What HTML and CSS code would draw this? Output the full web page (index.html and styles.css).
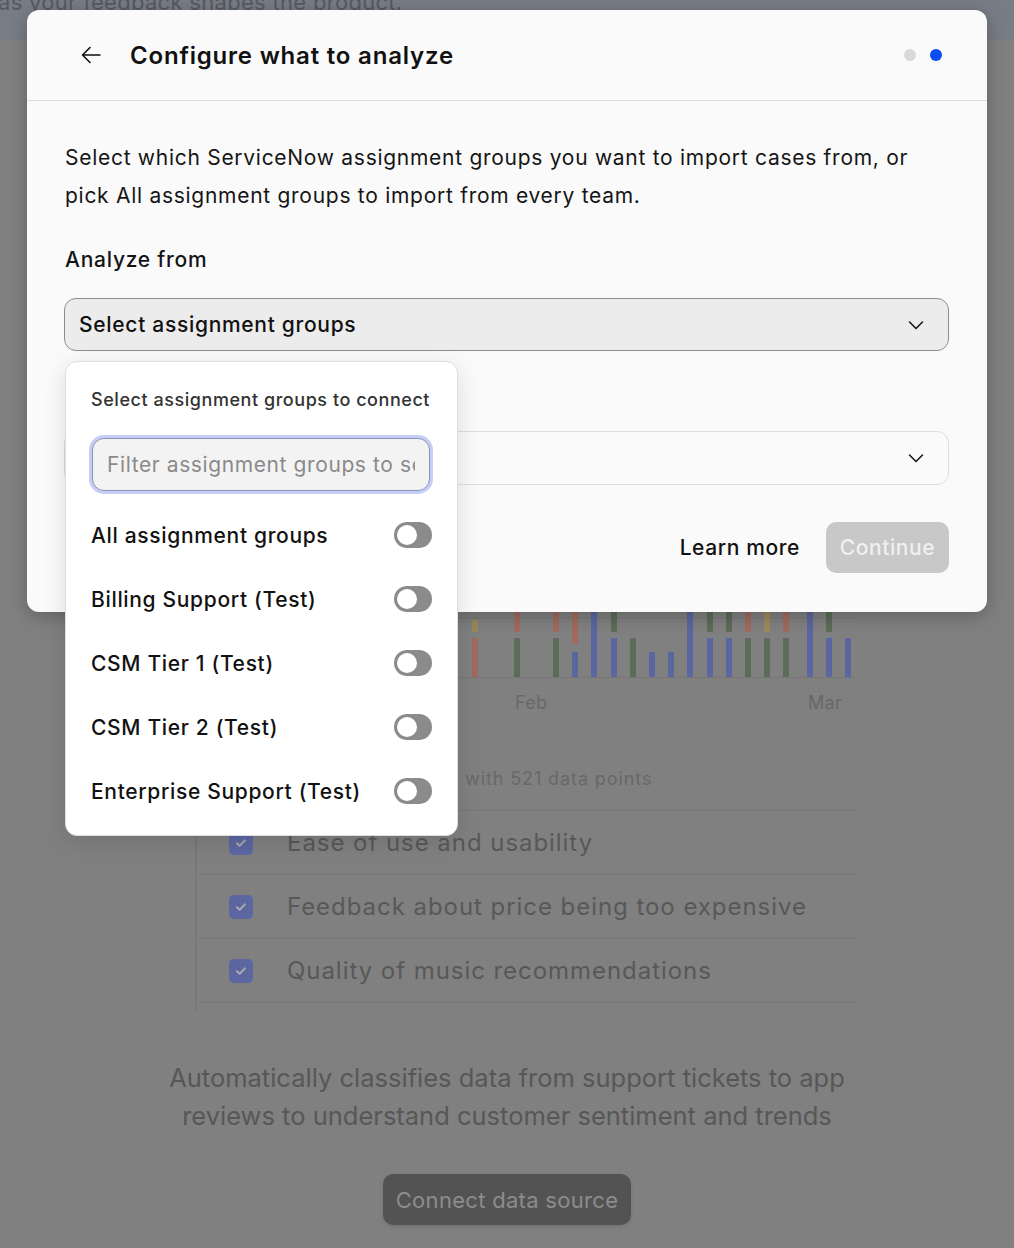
FILE: index.html
```html
<!DOCTYPE html>
<html lang="en">
<head>
<meta charset="utf-8">
<title>Configure what to analyze</title>
<link rel="stylesheet" href="styles.css">
</head>
<body>
<div class="page">
  <div class="topbar"><p class="topbar-text">as your feedback shapes the product.</p></div>

  <section class="card">
    <svg class="chart" width="660" height="80" viewBox="0 0 660 80">
      <line x1="2" y1="18" x2="660" y2="18" stroke="#777" stroke-width="1"/>
      <line x1="2" y1="77.5" x2="660" y2="77.5" stroke="#767676" stroke-width="1"/>
      <g>
        <rect x="277" y="20" width="6" height="12" fill="#9a8a5c"/><rect x="277" y="38" width="6" height="39" fill="#a06b5d"/>
        <rect x="319" y="0" width="6" height="32" fill="#a06b5d"/><rect x="319" y="38" width="6" height="39" fill="#5b6c58"/>
        <rect x="358" y="0" width="6" height="32" fill="#a06b5d"/><rect x="358" y="38" width="6" height="39" fill="#5b6c58"/>
        <rect x="377" y="0" width="6" height="44" fill="#a06b5d"/><rect x="377" y="52" width="6" height="25" fill="#5a66a0"/>
        <rect x="396" y="0" width="6" height="77" fill="#5a66a0"/>
        <rect x="416" y="0" width="6" height="32" fill="#5b6c58"/><rect x="416" y="38" width="6" height="39" fill="#5a66a0"/>
        <rect x="435" y="38" width="6" height="39" fill="#5b6c58"/>
        <rect x="454" y="52" width="6" height="25" fill="#5a66a0"/>
        <rect x="473" y="52" width="6" height="25" fill="#5a66a0"/>
        <rect x="492" y="0" width="6" height="77" fill="#5a66a0"/>
        <rect x="512" y="0" width="6" height="32" fill="#5b6c58"/><rect x="512" y="38" width="6" height="39" fill="#5a66a0"/>
        <rect x="531" y="0" width="6" height="32" fill="#5b6c58"/><rect x="531" y="38" width="6" height="39" fill="#5a66a0"/>
        <rect x="550" y="0" width="6" height="32" fill="#a06b5d"/><rect x="550" y="38" width="6" height="39" fill="#5b6c58"/>
        <rect x="569" y="0" width="6" height="32" fill="#9a8a5c"/><rect x="569" y="38" width="6" height="39" fill="#5b6c58"/>
        <rect x="588" y="0" width="6" height="32" fill="#a06b5d"/><rect x="588" y="38" width="6" height="39" fill="#5b6c58"/>
        <rect x="612" y="0" width="6" height="77" fill="#5a66a0"/>
        <rect x="631" y="0" width="6" height="32" fill="#5b6c58"/><rect x="631" y="38" width="6" height="39" fill="#5a66a0"/>
        <rect x="650" y="38" width="6" height="39" fill="#5a66a0"/>
      </g>
    </svg>
    <div class="axis-labels"><span class="axis-feb">Feb</span><span class="axis-mar">Mar</span></div>
    <div class="summary">with 521 data points</div>
    <ul class="topics">
      <li class="topic"><span class="checkbox"><svg width="14" height="14" viewBox="0 0 14 14"><path d="M3 7.2l2.6 2.6L11 4.4" fill="none" stroke="#a9a9a9" stroke-width="2" stroke-linecap="round" stroke-linejoin="round"/></svg></span>Ease of use and usability</li>
      <li class="topic"><span class="checkbox"><svg width="14" height="14" viewBox="0 0 14 14"><path d="M3 7.2l2.6 2.6L11 4.4" fill="none" stroke="#a9a9a9" stroke-width="2" stroke-linecap="round" stroke-linejoin="round"/></svg></span>Feedback about price being too expensive</li>
      <li class="topic"><span class="checkbox"><svg width="14" height="14" viewBox="0 0 14 14"><path d="M3 7.2l2.6 2.6L11 4.4" fill="none" stroke="#a9a9a9" stroke-width="2" stroke-linecap="round" stroke-linejoin="round"/></svg></span>Quality of music recommendations</li>
    </ul>
  </section>

  <p class="description">Automatically classifies data from support tickets to app reviews to understand customer sentiment and trends</p>
  <div class="cta-wrap"><button class="cta">Connect data source</button></div>
</div>

<div class="modal">
  <header class="modal-header">
    <svg class="back" width="24" height="24" viewBox="0 0 24 24"><path d="M21 12H3.5M11 4.5L3.5 12l7.5 7.5" fill="none" stroke="#111" stroke-width="1.6" stroke-linecap="round" stroke-linejoin="round"/></svg>
    <h1 class="modal-title">Configure what to analyze</h1>
    <div class="steps"><span class="dot"></span><span class="dot dot-active"></span></div>
  </header>
  <div class="modal-body">
    <p class="intro">Select which ServiceNow assignment groups you want to import cases from, or pick All assignment groups to import from every team.</p>
    <div class="field-label">Analyze from</div>
    <div class="select select-open"><span>Select assignment groups</span>
      <svg width="20" height="20" viewBox="0 0 20 20"><path d="M3.5 7l6.5 6.5L16.5 7" fill="none" stroke="#111" stroke-width="1.5" stroke-linecap="round" stroke-linejoin="round"/></svg>
    </div>
    <div class="field-label field-label-2">Time range</div>
    <div class="select select-plain"><span></span>
      <svg width="20" height="20" viewBox="0 0 20 20"><path d="M3.5 7l6.5 6.5L16.5 7" fill="none" stroke="#111" stroke-width="1.5" stroke-linecap="round" stroke-linejoin="round"/></svg>
    </div>
    <div class="modal-footer">
      <a class="learn">Learn more</a>
      <button class="continue">Continue</button>
    </div>
  </div>

  <div class="popover">
    <div class="popover-title">Select assignment groups to connect</div>
    <div class="filter"><input class="filter-input" type="text" placeholder="Filter assignment groups to search"></div>
    <ul class="groups">
      <li class="group"><span>All assignment groups</span><span class="toggle"><span class="knob"></span></span></li>
      <li class="group"><span>Billing Support (Test)</span><span class="toggle"><span class="knob"></span></span></li>
      <li class="group"><span>CSM Tier 1 (Test)</span><span class="toggle"><span class="knob"></span></span></li>
      <li class="group"><span>CSM Tier 2 (Test)</span><span class="toggle"><span class="knob"></span></span></li>
      <li class="group"><span>Enterprise Support (Test)</span><span class="toggle"><span class="knob"></span></span></li>
    </ul>
  </div>
</div>
</body>
</html>
```

FILE: styles.css
```css
* { box-sizing: border-box; }
html, body {
  margin: 0;
  padding: 0;
}
body {
  width: 1014px;
  height: 1248px;
  overflow: hidden;
  background: #808080;
  font-family: Inter, "Noto Sans", sans-serif;
  position: relative;
}
.page {
  display: flex;
  flex-direction: column;
}
.topbar {
  height: 40px;
  background: #787c85;
  overflow: hidden;
}
.topbar-text {
  margin: -11px 0 0 -2px;
  font-size: 22px;
  line-height: 26px;
  letter-spacing: 0.3px;
  color: #555a62;
}
.card {
  margin-left: 195px;
  width: 660px;
  height: 970px;
  padding-top: 560px;
  border-left: 2px solid #787878;
}
.chart { display: block; margin-left: -2px; }
.axis-labels {
  height: 44px;
  display: flex;
  align-items: center;
  font-size: 18px;
  color: #686868;
  padding-right: 13px;
  letter-spacing: 0.3px;
}
.axis-feb { margin-left: 318px; }
.axis-mar { margin-left: auto; }
.summary {
  height: 87px;
  padding: 43px 0 0 268px;
  font-size: 18px;
  line-height: 24px;
  letter-spacing: 0.9px;
  color: #686868;
  border-bottom: 1px solid #777;
}
.topics {
  list-style: none;
  margin: 0;
  padding: 0;
}
.topic {
  height: 64px;
  display: flex;
  align-items: center;
  border-bottom: 1px solid #777;
  font-size: 24px;
  letter-spacing: 0.95px;
  color: #585858;
  padding-left: 32px;
}
.checkbox {
  width: 24px;
  height: 24px;
  border-radius: 5px;
  background: #5c67a2;
  display: flex;
  align-items: center;
  justify-content: center;
  margin-right: 34px;
}
.description {
  margin: 49px auto 0;
  width: 720px;
  text-align: center;
  font-size: 25.5px;
  line-height: 38px;
  color: #575757;
}
.cta-wrap {
  display: flex;
  justify-content: center;
  margin-top: 39px;
}
.cta {
  width: 248px;
  height: 51px;
  border: none;
  border-radius: 10px;
  background: #535353;
  color: #8c8c8c;
  font-family: Inter, sans-serif;
  font-size: 22px;
  letter-spacing: 0.3px;
  box-shadow: 0 2px 4px rgba(0,0,0,0.1);
}

/* Modal */
.modal {
  position: absolute;
  left: 27px;
  top: 10px;
  width: 960px;
  height: 602px;
  background: #fafafa;
  border-radius: 12px;
  box-shadow: 0 4px 18px rgba(0,0,0,0.25);
}
.modal-header {
  height: 91px;
  border-bottom: 1px solid #dcdcdc;
  display: flex;
  align-items: center;
  padding: 0 45px 0 52px;
}
.back { flex: none; }
.modal-title {
  margin: 0 0 0 27px;
  font-size: 24px;
  font-weight: 600;
  color: #111;
  letter-spacing: 0.8px;
}
.steps {
  margin-left: auto;
  display: flex;
  gap: 14px;
}
.dot {
  width: 12px;
  height: 12px;
  border-radius: 50%;
  background: #d9d9d9;
}
.dot-active { background: #0a4cf2; }
.modal-body {
  padding: 38px 38px 0 37px;
}
.intro {
  margin: 0;
  padding-left: 1px;
  font-size: 21px;
  line-height: 38px;
  letter-spacing: 0.72px;
  color: #151515;
}
.field-label {
  margin-top: 30px;
  font-size: 21px;
  line-height: 30px;
  font-weight: 500;
  letter-spacing: 0.75px;
  color: #151515;
  padding-left: 1px;
}
.select {
  margin-top: 23px;
  height: 53px;
  border-radius: 12px;
  display: flex;
  align-items: center;
  justify-content: space-between;
  padding: 0 22px 0 14px;
  font-size: 21px;
  font-weight: 500;
  letter-spacing: 0.7px;
  color: #111;
}
.select-open {
  background: #ececec;
  border: 1.5px solid #8d8d8d;
}
.field-label-2 {
  margin-top: 36px;
  visibility: hidden;
}
.select-plain {
  margin-top: 14px;
  height: 54px;
  background: #fafafa;
  border: 1.5px solid #dedede;
}
.modal-footer {
  margin-top: 37px;
  display: flex;
  justify-content: flex-end;
  align-items: center;
}
.learn {
  font-size: 21px;
  font-weight: 500;
  letter-spacing: 0.6px;
  color: #111;
  margin-right: 26px;
}
.continue {
  width: 123px;
  height: 51px;
  border: none;
  border-radius: 10px;
  background: #c8c8c8;
  color: #f0f0f0;
  font-family: Inter, sans-serif;
  font-size: 21px;
  font-weight: 500;
  letter-spacing: 0.6px;
}

/* Popover */
.popover {
  position: absolute;
  left: 38px;
  top: 351px;
  width: 393px;
  height: 475px;
  background: #fff;
  border: 1px solid #dedede;
  border-radius: 12px;
  box-shadow: 0 6px 24px rgba(0,0,0,0.12);
  padding: 26px 26px 0 25px;
}
.popover-title {
  font-size: 18px;
  line-height: 24px;
  font-weight: 500;
  letter-spacing: 0.55px;
  white-space: nowrap;
  color: #333;
}
.filter {
  margin-top: 26px;
  padding: 0 1px;
}
.filter-input {
  width: 100%;
  height: 53px;
  border: 1px solid #8a93b8;
  border-radius: 12px;
  background: #f3f3f3;
  box-shadow: 0 0 0 3px #c5cef7;
  padding: 0 14px;
  font-family: Inter, sans-serif;
  font-size: 21px;
  letter-spacing: 0.6px;
  color: #333;
  outline: none;
}
.filter-input::placeholder { color: #8a8a8a; }
.groups {
  list-style: none;
  margin: 12px 0 0;
  padding: 0;
}
.group {
  height: 64px;
  display: flex;
  align-items: center;
  justify-content: space-between;
  font-size: 21px;
  font-weight: 500;
  letter-spacing: 0.67px;
  color: #111;
}
.toggle {
  width: 38px;
  height: 26px;
  border-radius: 13px;
  background: #8b8b8b;
  display: flex;
  align-items: center;
  padding-left: 3px;
  margin-right: -1px;
}
.knob {
  width: 20px;
  height: 20px;
  border-radius: 50%;
  background: #fff;
}
```
